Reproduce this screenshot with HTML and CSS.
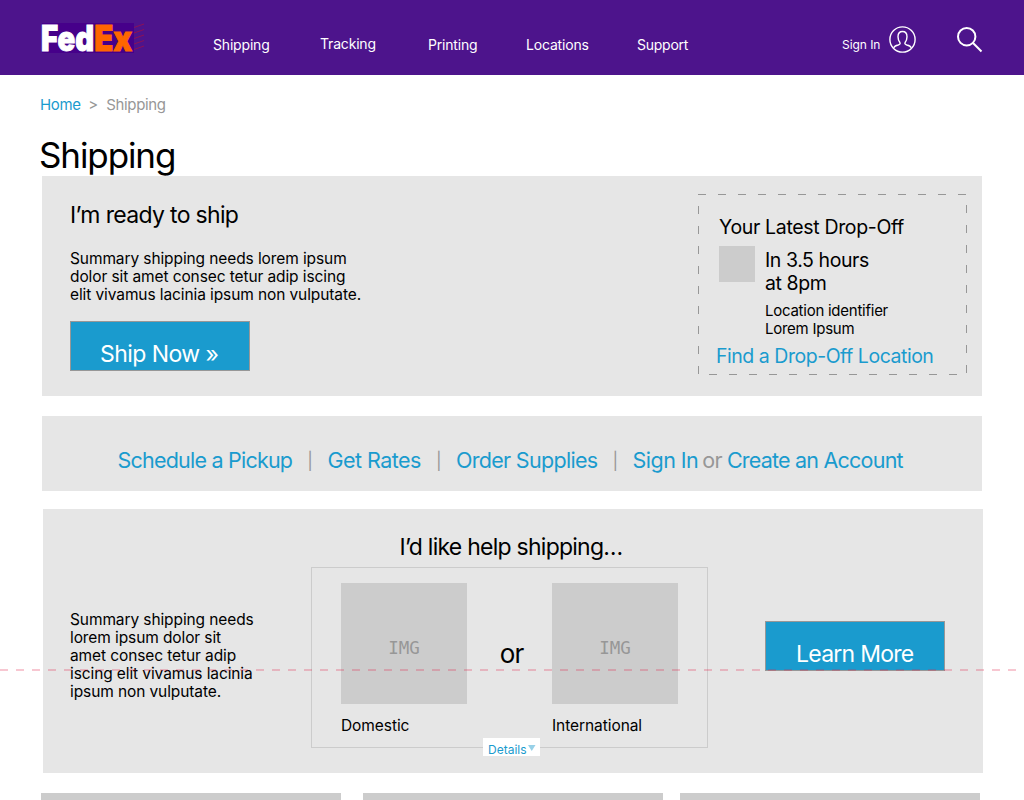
FILE: index.html
```
<!DOCTYPE html>
<html lang="en">
<head>
    <meta charset="UTF-8">
    <meta name="viewport" content="width=device-width, initial-scale=1.0">
    <title>FedEx - Shipping</title>
    <link rel="stylesheet" href="styles.css">
</head>
<body>
    <header class="header">
        <a class="logo" href="#">
            <svg width="103" height="30" viewBox="0 0 103 30">
                <rect width="92" height="30" fill="#46008a"/>
                <text class="logo-text" x="-1" y="27.500" textLength="53" lengthAdjust="spacingAndGlyphs" fill="#fff" stroke="#fff">Fed</text>
                <text class="logo-text" x="52.200" y="27.500" textLength="38" lengthAdjust="spacingAndGlyphs" fill="#ff6600" stroke="#ff6600">Ex</text>
                <path d="M92 4.500l10-3.500M92 10l10-3.500M92 15.500l10-3.500M92 21l10-3.500M92 26.500l10-3.500" stroke="#8c1058" stroke-width="1" fill="none"/>
            </svg>
        </a>
        <nav class="nav">
            <a href="#">Shipping</a>
            <a href="#" class="tracking">Tracking</a>
            <a href="#">Printing</a>
            <a href="#">Locations</a>
            <a href="#" class="support">Support</a>
        </nav>
        <a class="sign-in" href="#">Sign In</a>
        <svg class="user-icon" width="27" height="27" viewBox="0 0 27 27" fill="none" stroke="#fff" stroke-width="1.4">
            <circle cx="13.500" cy="13.500" r="12.600"/>
            <path d="M4.800 21.800c.5-1.700 2-2.300 4.400-2.800 1.800-.5 2.300-1.400 1.700-2.500C9.600 14.800 9 13 9 10.700 9 7.500 10.700 5.500 13.500 5.500S18 7.500 18 10.700c0 2.300-.6 4.100-1.900 5.800-.6 1.100-.1 2 1.700 2.500 2.400.5 3.900 1.100 4.400 2.800"/>
        </svg>
        <svg class="search-icon" width="26" height="26" viewBox="0 0 26 26" fill="none" stroke="#fff" stroke-width="2">
            <circle cx="9.700" cy="9.700" r="8.700"/>
            <path d="M15.800 15.800L24.500 24.500"/>
        </svg>
    </header>

    <div class="breadcrumb">
        <a href="#">Home</a>
        <span>&gt;</span>
        <span class="current">Shipping</span>
    </div>
    <h1>Shipping</h1>

    <section class="panel ship">
        <div class="ready">
            <h2>I’m ready to ship</h2>
            <p>Summary shipping needs lorem ipsum<br>dolor sit amet consec tetur adip iscing<br>elit vivamus lacinia ipsum non vulputate.</p>
            <a class="button ship-now" href="#">Ship Now »</a>
        </div>
        <div class="dropoff">
            <h3>Your Latest Drop-Off</h3>
            <div class="dropoff-row">
                <div class="thumb"></div>
                <div>
                    <div class="time">In 3.5 hours<br>at 8pm</div>
                    <div class="location">Location identifier<br>Lorem Ipsum</div>
                </div>
            </div>
            <a class="find" href="#">Find a Drop-Off Location</a>
        </div>
    </section>

    <section class="panel links">
        <a class="schedule" href="#">Schedule a Pickup</a>
        <span class="divider">|</span>
        <a class="rates" href="#">Get Rates</a>
        <span class="divider">|</span>
        <a class="supplies" href="#">Order Supplies</a>
        <span class="divider">|</span>
        <a class="account-in" href="#">Sign In</a>
        <span class="or">or</span>
        <a class="account-new" href="#">Create an Account</a>
    </section>

    <section class="panel help">
        <p>Summary shipping needs<br>lorem ipsum dolor sit<br>amet consec tetur adip<br>iscing elit vivamus lacinia<br>ipsum non vulputate.</p>
        <div class="help-main">
            <h2>I’d like help shipping…</h2>
            <div class="options">
                <div class="option">
                    <div class="img">IMG</div>
                    <span>Domestic</span>
                </div>
                <div class="options-or">or</div>
                <div class="option">
                    <div class="img">IMG</div>
                    <span>International</span>
                </div>
                <a class="details" href="#">Details<svg width="8" height="6" viewBox="0 0 8 6"><path d="M0 0h7.500L3.750 6z" fill="#98d1e8"/></svg></a>
            </div>
        </div>
        <a class="button learn-more" href="#">Learn More</a>
    </section>

    <div class="cards">
        <div class="card"></div>
        <div class="card"></div>
        <div class="card"></div>
    </div>

    <div class="fold-line"></div>
</body>
</html>
```
FILE: styles.css
```
* {
    box-sizing: border-box;
}
body {
    position: relative;
    height: 800px;
    margin: 0;
    overflow: hidden;
    background-color: #fff;
    color: #000;
    font-family: Inter, "Liberation Sans", sans-serif;
}
a {
    color: #1a9bce;
    text-decoration: none;
}
h1, h2, h3, p {
    margin: 0;
    font-weight: 400;
}
svg {
    display: block;
    overflow: visible;
}
.header {
    display: flex;
    align-items: flex-start;
    height: 75px;
    padding-left: 42px;
    background-color: #4d148c;
}
.header a {
    color: #fff;
}
.logo {
    width: 171px;
    padding-top: 23px;
}
.logo-text {
    font-size: 35px;
    font-weight: 900;
    stroke-width: 1px;
}
.nav {
    display: grid;
    grid-template-columns: 107px 108px 98px 111px 205px;
    padding-top: 35px;
    font-size: 14px;
    line-height: 20px;
    letter-spacing: -0.18px;
}
.nav .tracking {
    margin-top: -1px;
}
.nav .support {
    letter-spacing: -0.25px;
}
.sign-in {
    width: 47px;
    padding-top: 37px;
    font-size: 12px;
    line-height: 16px;
    letter-spacing: -0.05px;
}
.user-icon {
    margin-top: 26px;
}
.search-icon {
    margin: 27px 0 0 41px;
}
.breadcrumb {
    display: flex;
    gap: 7.5px;
    padding: 20px 40px 0;
    font-size: 15px;
    line-height: 20px;
    letter-spacing: -0.35px;
    color: #979797;
}
.breadcrumb .current {
    margin-left: 1px;
}
h1 {
    margin: 19px 0 0 39px;
    font-size: 35px;
    line-height: 42px;
    letter-spacing: -1.1px;
}
h2 {
    font-size: 23px;
    line-height: 28px;
    letter-spacing: -0.67px;
}
p {
    font-size: 15.5px;
    line-height: 18px;
    letter-spacing: -0.1px;
}
.panel {
    display: flex;
    width: 940px;
    margin-left: 42px;
    background-color: #e6e6e6;
}
.button {
    display: block;
    width: 180px;
    height: 50px;
    border: 1px solid #979797;
    background-color: #1a9bce;
    color: #fff;
    font-size: 23px;
    line-height: 28px;
}

/* ready to ship */
.ship {
    justify-content: space-between;
    height: 220px;
    padding: 18px 15px 0 28px;
}
.ready {
    padding-top: 7px;
}
.ready p {
    margin: 21px 0 17px;
}
.ship-now {
    padding: 18px 0 0 29px;
    letter-spacing: -0.55px;
}
.dropoff {
    width: 269px;
    height: 181px;
    padding: 21px 0 0 21px;
    background:
        linear-gradient(90deg, #979797 8px, transparent 8px) 0 0 / 20px 1px repeat-x,
        linear-gradient(#979797 8px, transparent 8px) 100% 11px / 1px 20px repeat-y,
        linear-gradient(90deg, #979797 8px, transparent 8px) 11px 100% / 20px 1px repeat-x,
        linear-gradient(#979797 8px, transparent 8px) 0 12px / 1px 20px repeat-y;
}
.dropoff h3 {
    font-size: 19.5px;
    line-height: 24px;
    letter-spacing: -0.34px;
}
.dropoff-row {
    display: flex;
    gap: 10px;
    padding-top: 7px;
}
.thumb {
    width: 36px;
    height: 36px;
    background-color: #ccc;
}
.time {
    padding-top: 3px;
    font-size: 19.5px;
    line-height: 23px;
    letter-spacing: -0.42px;
}
.location {
    margin-top: 7px;
    font-size: 15px;
    line-height: 18px;
    letter-spacing: -0.25px;
}
.find {
    display: block;
    margin: 6px 0 0 -3px;
    font-size: 19.5px;
    line-height: 24px;
    letter-spacing: -0.47px;
}

/* quick links */
.links {
    height: 75px;
    margin-top: 20px;
    padding: 31px 0 0 75.5px;
    font-size: 21.5px;
    line-height: 26px;
    letter-spacing: -0.7px;
}
.schedule, .account-new {
    letter-spacing: -0.78px;
}
.rates, .account-in {
    letter-spacing: -0.53px;
}
.divider {
    width: 35.2px;
    padding-top: 1px;
    color: #979797;
    font-size: 17px;
    text-align: center;
}
.or {
    margin: 0 5px 0 4px;
    color: #979797;
}

/* help */
.help {
    height: 264px;
    margin: 18px 0 0 43px;
    padding-left: 27px;
}
.help p {
    width: 241px;
    padding-top: 102px;
}
.help-main {
    width: 397px;
    padding-top: 24px;
}
.help-main h2 {
    padding-left: 3px;
    letter-spacing: -0.75px;
    text-align: center;
}
.options {
    position: relative;
    display: flex;
    height: 181px;
    margin-top: 6px;
    padding: 15px 29px 0;
    border: 1px solid #ccc;
}
.option {
    width: 126px;
    font-size: 15.5px;
    line-height: 18px;
    letter-spacing: -0.07px;
}
.img {
    height: 121px;
    margin-bottom: 13px;
    padding-top: 55px;
    background-color: #ccc;
    color: #979797;
    font-family: "DejaVu Sans Mono", monospace;
    font-size: 17.5px;
    line-height: 20px;
    letter-spacing: -0.1px;
    text-align: center;
}
.options-or {
    width: 85px;
    padding: 55px 0 0 4px;
    font-size: 26px;
    line-height: 32px;
    letter-spacing: -1px;
    text-align: center;
}
.details {
    position: absolute;
    left: 171px;
    top: 170px;
    display: flex;
    width: 57px;
    height: 18px;
    padding: 4px 0 0 5px;
    background-color: #fff;
    font-size: 12px;
    line-height: 16px;
}
.details svg {
    margin: 3px 0 0 1px;
}
.learn-more {
    margin: 112px 0 0 57px;
    padding: 18px 0 0 30px;
    letter-spacing: -0.75px;
}

.cards {
    display: flex;
    margin: 20px 0 0 41px;
}
.card {
    width: 300px;
    height: 7px;
    margin-right: 22px;
    background-color: #ccc;
}
.card:nth-child(2) {
    margin-right: 17px;
}
.fold-line {
    position: absolute;
    top: 669px;
    left: 0;
    width: 100%;
    height: 2px;
    background: repeating-linear-gradient(90deg, rgba(224, 32, 72, 0.25) 0 8px, transparent 8px 16px);
}
```
